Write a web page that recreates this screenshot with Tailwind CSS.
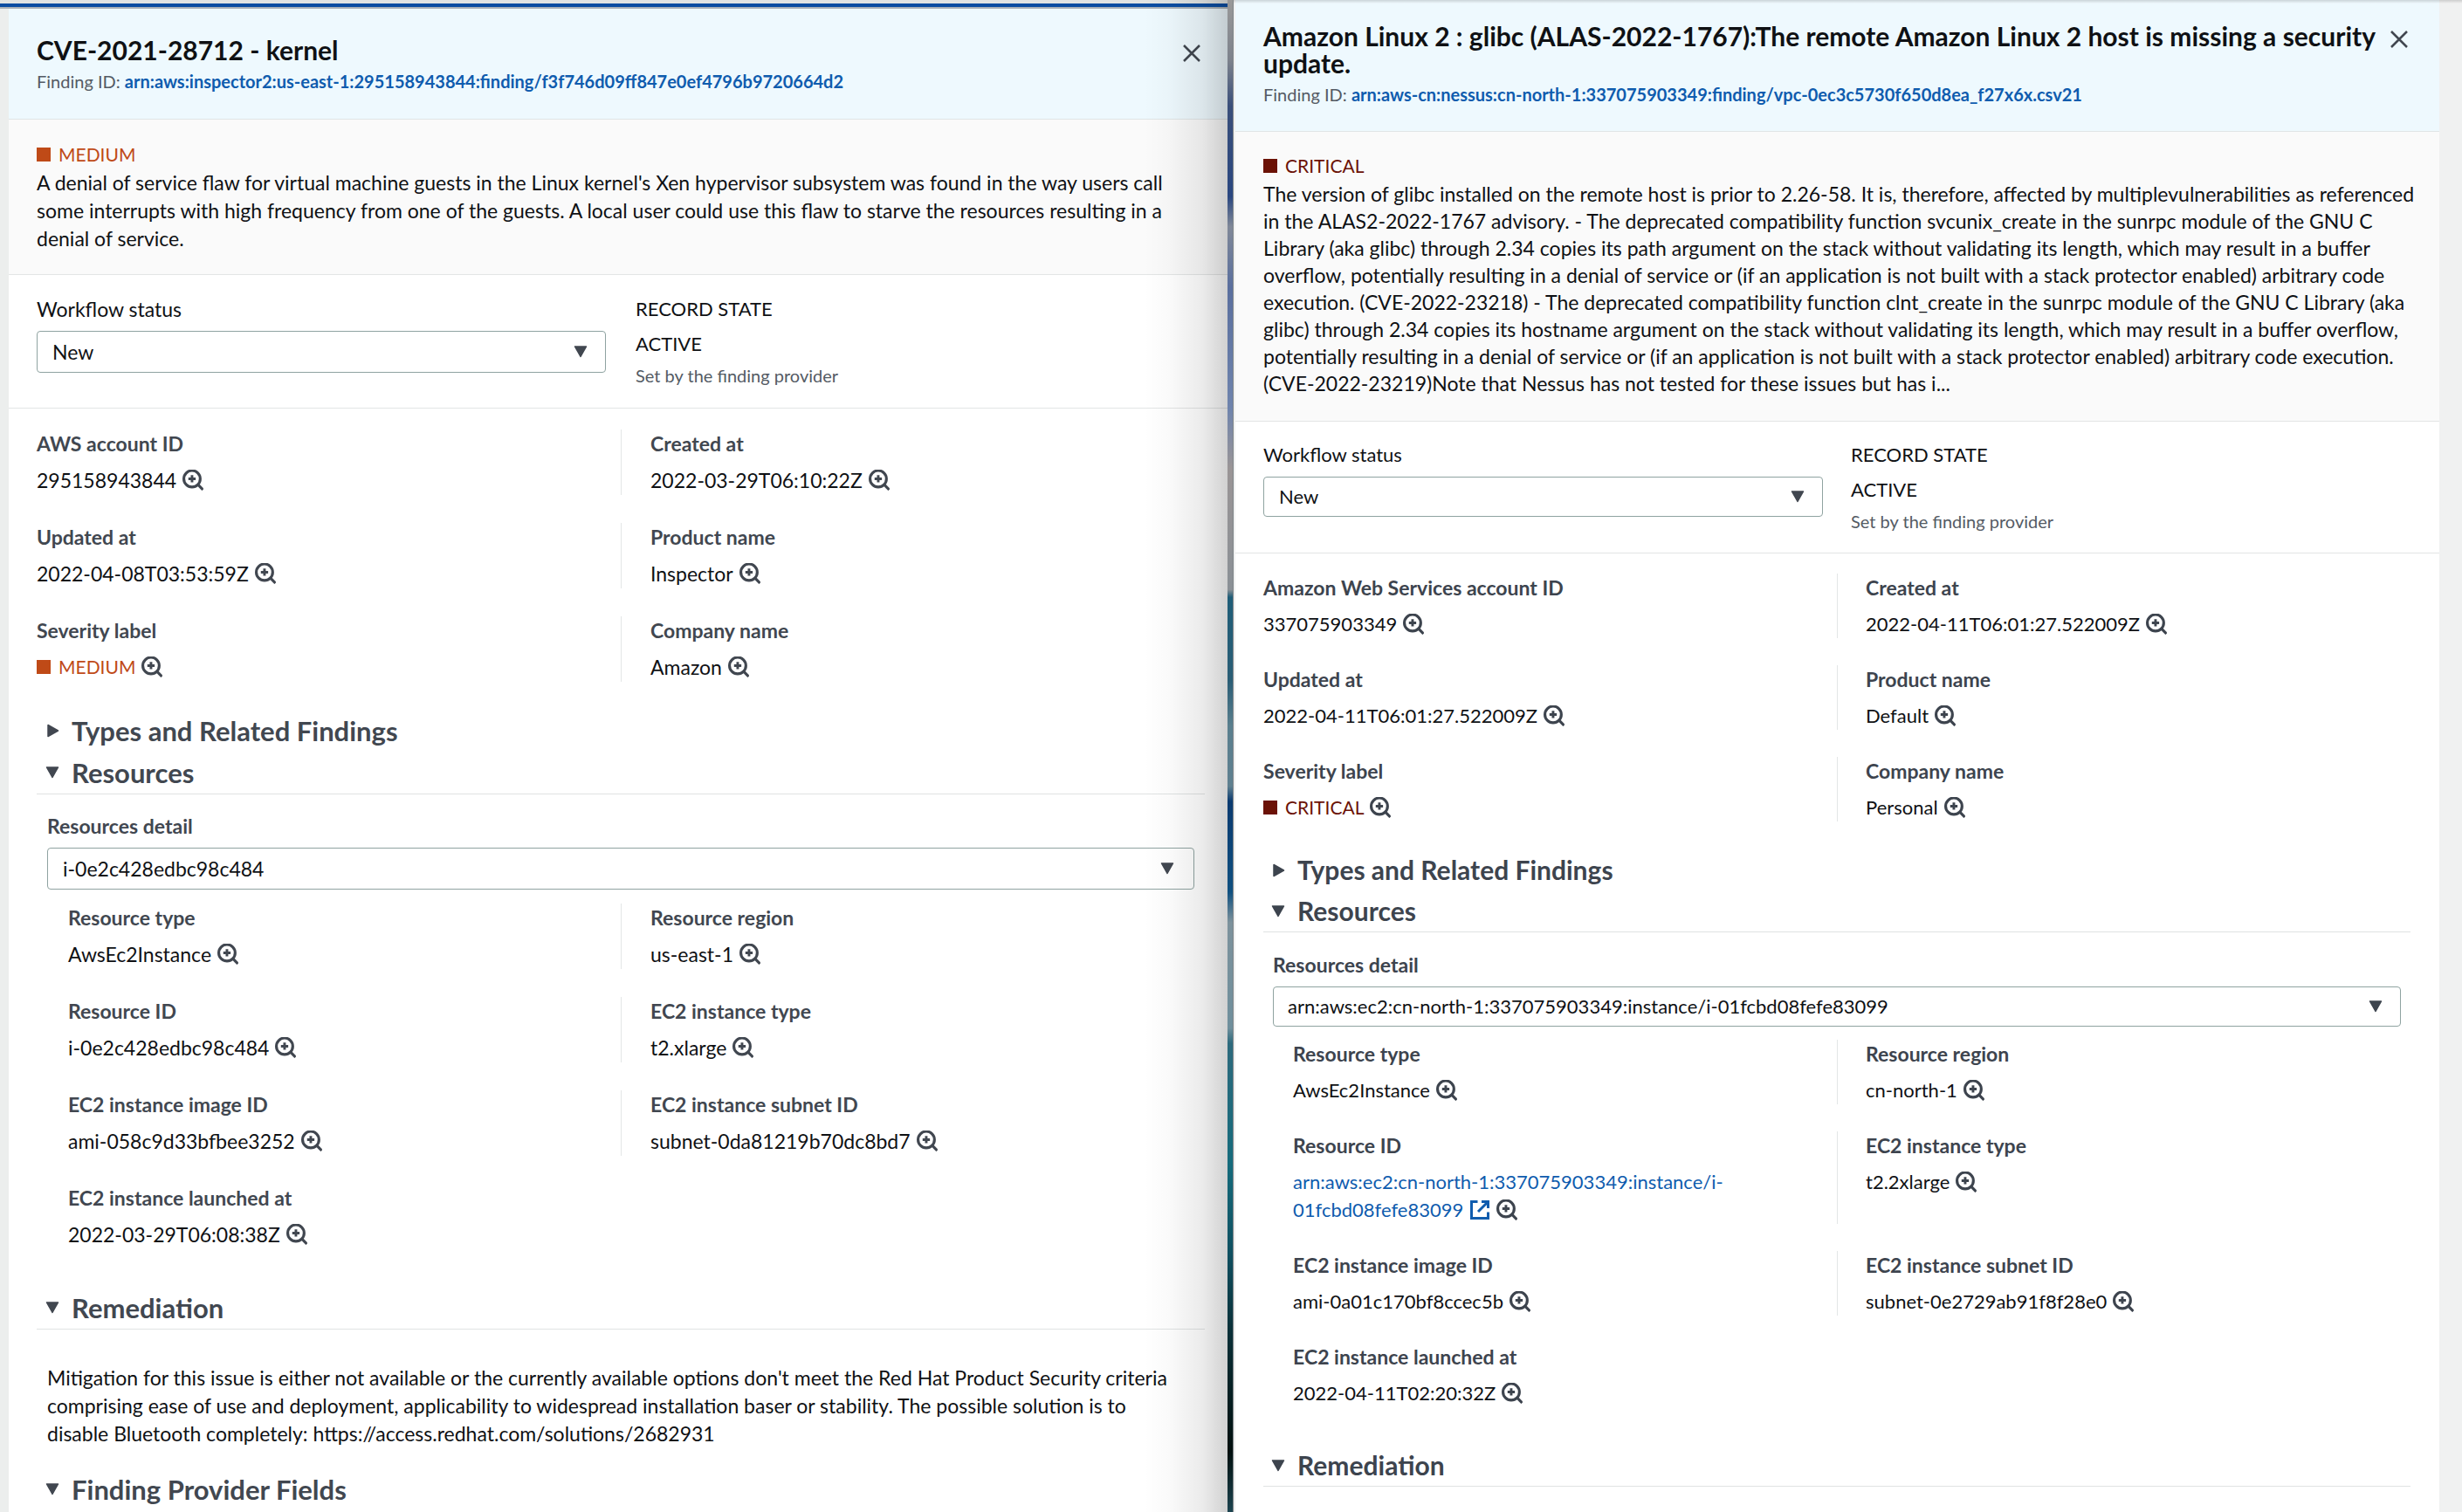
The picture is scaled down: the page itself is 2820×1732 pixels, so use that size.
<!DOCTYPE html>
<html lang="en">
<head>
<meta charset="utf-8">
<title>Security findings</title>
<script src="https://cdn.jsdelivr.net/npm/@tailwindcss/browser@4"></script>
</head>
<body class="bg-[#eceeed] font-['Lato','Noto_Sans',sans-serif] text-[23px] leading-8 text-[#0f1114]">

<svg class="hidden" aria-hidden="true">
  <symbol id="zoom" viewBox="0.5 0.5 23 23"><g fill="none" stroke="currentColor" stroke-width="3"><circle cx="11" cy="10.500" r="9"/><path d="M17.500 17l5.500 5.500"/><path d="M11 6.500v8M7 10.500h8" stroke-width="2.800"/></g></symbol>
  <symbol id="close" viewBox="0 0 20 20"><path d="M1 1l18 18M19 1L1 19" fill="none" stroke="currentColor" stroke-width="2.500"/></symbol>
  <symbol id="external" viewBox="0 0 24 24"><g fill="none" stroke="currentColor" stroke-width="3"><path d="M9.500 2.500H2.500v19h19v-7"/><path d="M14 2.500h7.500V10M21 3L10 14"/></g></symbol>
  <symbol id="down" viewBox="0 0 16 14"><path d="M1.500 1h13L8 12.500z" fill="currentColor" stroke="currentColor" stroke-width="1.500" stroke-linejoin="round"/></symbol>
  <symbol id="right" viewBox="0 0 14 16"><path d="M1 1.500v13L12.500 8z" fill="currentColor" stroke="currentColor" stroke-width="1.500" stroke-linejoin="round"/></symbol>
</svg>

<div class="flex min-h-screen overflow-hidden">

  <!-- Finding window on the left -->
  <section class="relative flex w-[49.86%] flex-col">
    <div class="h-1 bg-[#e1e4e3]"></div>
    <div class="h-1 bg-[#0a4da2]"></div>
    <div class="h-[2px] bg-[#a9b1b7]"></div>
    <div class="ml-[10px] flex-1 bg-white">
      <header class="flex items-start justify-between border-b border-[#e0e5e6] bg-[#eef9fe] pt-[29px] pr-[31px] pb-[29px] pl-8">
        <div>
          <h1 class="text-[30px] leading-9 font-bold">CVE-2021-28712 - kernel</h1>
          <p class="mt-1 text-[20px] leading-7 text-[#545b64]">Finding ID: <a href="#" class="font-bold text-[#0f5cae]">arn:aws:inspector2:us-east-1:295158943844:finding/f3f746d09ff847e0ef4796b9720664d2</a></p>
        </div>
        <button type="button" aria-label="Close" class="mt-3 text-[#414750]"><svg class="size-5"><use href="#close"/></svg></button>
      </header>
      <div class="border-b border-[#e3e5e5] bg-[#fafafa] pt-6 pb-[25px] pl-8">
        <p class="flex items-center gap-[9px] text-[21px] text-[#bf4a17]"><span class="size-4 bg-[#bf4a17]"></span>MEDIUM</p>
        <p class="whitespace-nowrap">A denial of service flaw for virtual machine guests in the Linux kernel's Xen hypervisor subsystem was found in the way users call<br>some interrupts with high frequency from one of the guests. A local user could use this flaw to starve the resources resulting in a<br>denial of service.</p>
      </div>
      <div class="grid grid-cols-2 gap-[34px] border-b border-[#e3e5e5] pt-[23px] pr-[26px] pb-[23px] pl-8">
        <div>
          <label for="status-1" class="block">Workflow status</label>
          <div class="relative mt-[9px] text-[#414750]">
            <select id="status-1" class="h-12 w-full appearance-none rounded border border-[#8fa3a1] bg-white pl-[17px] text-[#0f1114]"><option>New</option></select>
            <svg class="pointer-events-none absolute top-[17px] right-[21px] h-[14px] w-4"><use href="#down"/></svg>
          </div>
        </div>
        <div class="text-[22px]">
          <p>RECORD STATE</p>
          <p class="mt-2">ACTIVE</p>
          <p class="mt-[6px] text-[20px] leading-7 text-[#545b64]">Set by the finding provider</p>
        </div>
      </div>
      <div class="pt-6 pr-[26px] pl-8 text-[#414750]">
        <dl class="grid grid-cols-2 gap-y-8">
          <div class="h-[75px]"><dt class="font-bold">AWS account ID</dt><dd class="mt-[10px] flex items-center gap-[7px]"><span class="text-[#0f1114]">295158943844</span><button type="button" aria-label="Filter by account"><svg class="size-6"><use href="#zoom"/></svg></button></dd></div>
          <div class="h-[75px] border-l border-[#e3e6e6] pl-[33px]"><dt class="font-bold">Created at</dt><dd class="mt-[10px] flex items-center gap-[7px]"><span class="text-[#0f1114]">2022-03-29T06:10:22Z</span><button type="button" aria-label="Filter by creation time"><svg class="size-6"><use href="#zoom"/></svg></button></dd></div>
          <div class="h-[75px]"><dt class="font-bold">Updated at</dt><dd class="mt-[10px] flex items-center gap-[7px]"><span class="text-[#0f1114]">2022-04-08T03:53:59Z</span><button type="button" aria-label="Filter by update time"><svg class="size-6"><use href="#zoom"/></svg></button></dd></div>
          <div class="h-[75px] border-l border-[#e3e6e6] pl-[33px]"><dt class="font-bold">Product name</dt><dd class="mt-[10px] flex items-center gap-[7px]"><span class="text-[#0f1114]">Inspector</span><button type="button" aria-label="Filter by product"><svg class="size-6"><use href="#zoom"/></svg></button></dd></div>
          <div class="h-[75px]"><dt class="font-bold">Severity label</dt><dd class="mt-[10px] flex items-center gap-[7px]"><span class="flex items-center gap-[9px] text-[21px] text-[#bf4a17]"><span class="size-4 bg-[#bf4a17]"></span>MEDIUM</span><button type="button" aria-label="Filter by severity"><svg class="size-6"><use href="#zoom"/></svg></button></dd></div>
          <div class="h-[75px] border-l border-[#e3e6e6] pl-[33px]"><dt class="font-bold">Company name</dt><dd class="mt-[10px] flex items-center gap-[7px]"><span class="text-[#0f1114]">Amazon</span><button type="button" aria-label="Filter by company"><svg class="size-6"><use href="#zoom"/></svg></button></dd></div>
        </dl>

        <h2 class="mt-8 text-[31px] leading-[48px] font-bold"><button type="button" aria-expanded="false" class="flex w-full items-center pl-[10px] text-left"><span class="w-[30px]"><svg class="ml-[2px] h-4 w-[14px]"><use href="#right"/></svg></span>Types and Related Findings</button></h2>
        <h2 class="border-b border-[#e0e3e3] text-[31px] leading-[48px] font-bold"><button type="button" aria-expanded="true" class="flex w-full items-center pl-[10px] text-left"><span class="w-[30px]"><svg class="h-[14px] w-4"><use href="#down"/></svg></span>Resources</button></h2>

        <div class="px-3 pt-5">
          <label for="resource-1" class="block font-bold">Resources detail</label>
          <div class="relative mt-[9px]">
            <select id="resource-1" class="h-12 w-full appearance-none rounded border border-[#8fa3a1] bg-white pl-[17px] text-[#0f1114]"><option>i-0e2c428edbc98c484</option></select>
            <svg class="pointer-events-none absolute top-[17px] right-[23px] h-[14px] w-4"><use href="#down"/></svg>
          </div>
        </div>
        <dl class="mt-4 grid grid-cols-2 gap-y-8">
          <div class="h-[75px] pl-9"><dt class="font-bold">Resource type</dt><dd class="mt-[10px] flex items-center gap-[7px]"><span class="text-[#0f1114]">AwsEc2Instance</span><button type="button" aria-label="Filter by resource type"><svg class="size-6"><use href="#zoom"/></svg></button></dd></div>
          <div class="h-[75px] border-l border-[#e3e6e6] pl-[33px]"><dt class="font-bold">Resource region</dt><dd class="mt-[10px] flex items-center gap-[7px]"><span class="text-[#0f1114]">us-east-1</span><button type="button" aria-label="Filter by region"><svg class="size-6"><use href="#zoom"/></svg></button></dd></div>
          <div class="h-[75px] pl-9"><dt class="font-bold">Resource ID</dt><dd class="mt-[10px] flex items-center gap-[7px]"><span class="text-[#0f1114]">i-0e2c428edbc98c484</span><button type="button" aria-label="Filter by resource ID"><svg class="size-6"><use href="#zoom"/></svg></button></dd></div>
          <div class="h-[75px] border-l border-[#e3e6e6] pl-[33px]"><dt class="font-bold">EC2 instance type</dt><dd class="mt-[10px] flex items-center gap-[7px]"><span class="text-[#0f1114]">t2.xlarge</span><button type="button" aria-label="Filter by instance type"><svg class="size-6"><use href="#zoom"/></svg></button></dd></div>
          <div class="h-[75px] pl-9"><dt class="font-bold">EC2 instance image ID</dt><dd class="mt-[10px] flex items-center gap-[7px]"><span class="text-[#0f1114]">ami-058c9d33bfbee3252</span><button type="button" aria-label="Filter by image ID"><svg class="size-6"><use href="#zoom"/></svg></button></dd></div>
          <div class="h-[75px] border-l border-[#e3e6e6] pl-[33px]"><dt class="font-bold">EC2 instance subnet ID</dt><dd class="mt-[10px] flex items-center gap-[7px]"><span class="text-[#0f1114]">subnet-0da81219b70dc8bd7</span><button type="button" aria-label="Filter by subnet ID"><svg class="size-6"><use href="#zoom"/></svg></button></dd></div>
          <div class="h-[75px] pl-9"><dt class="font-bold">EC2 instance launched at</dt><dd class="mt-[10px] flex items-center gap-[7px]"><span class="text-[#0f1114]">2022-03-29T06:08:38Z</span><button type="button" aria-label="Filter by launch time"><svg class="size-6"><use href="#zoom"/></svg></button></dd></div>
        </dl>

        <h2 class="mt-[43px] border-b border-[#e0e3e3] text-[31px] leading-[48px] font-bold"><button type="button" aria-expanded="true" class="flex w-full items-center pl-[10px] text-left"><span class="w-[30px]"><svg class="h-[14px] w-4"><use href="#down"/></svg></span>Remediation</button></h2>
        <p class="pt-[39px] pl-3 whitespace-nowrap text-[#0f1114]">Mitigation for this issue is either not available or the currently available options don't meet the Red Hat Product Security criteria<br>comprising ease of use and deployment, applicability to widespread installation baser or stability. The possible solution is to<br>disable Bluetooth completely: https://access.redhat.com/solutions/2682931</p>
        <h2 class="mt-6 text-[31px] leading-[48px] font-bold"><button type="button" aria-expanded="true" class="flex w-full items-center pl-[10px] text-left"><span class="w-[30px]"><svg class="h-[14px] w-4"><use href="#down"/></svg></span>Finding Provider Fields</button></h2>
      </div>
    </div>
    <!-- Shadow cast by the window in front -->
    <div class="pointer-events-none absolute inset-y-0 right-0 w-24 bg-[linear-gradient(to_right,transparent,rgba(0,0,0,0.02)_30%,rgba(0,0,0,0.08)_70%,rgba(0,0,0,0.18))]"></div>
  </section>

  <!-- Desktop wallpaper between the windows -->
  <div class="w-[6px] bg-[linear-gradient(to_bottom,#999_0%,#7d828c_4%,#3a4f7a_7%,#2a4780_13%,#808898_15%,#5a6f9e_19%,#6f84ad_27%,#9a9596_31%,#8a9096_39%,#1f5d78_39.5%,#2a5d75_45%,#5a7f8e_48%,#5f8090_52%,#0a3a70_53%,#0f5080_59%,#7d929c_61%,#6f8f9c_68%,#2d6a7d_69%,#156b7c_77%,#0f4f60_83%,#0a3038_88%,#02100f_96%,#1c4450_100%)]"></div>

  <!-- Finding window on the right -->
  <section class="relative flex-1 border-l border-[#7f8588] bg-[#f0f1f1] pr-[26px] pl-[2px]">
    <div class="min-h-full bg-white">
      <header class="flex items-start justify-between border-b border-[#e0e5e6] bg-[#eef9fe] pt-[26px] pr-9 pb-7 pl-8">
        <div>
          <h1 class="text-[30px] leading-[31px] font-bold whitespace-nowrap">Amazon Linux 2 : glibc (ALAS-2022-1767):The remote Amazon Linux 2 host is missing a security<br>update.</h1>
          <p class="mt-[6px] text-[20px] leading-7 text-[#545b64]">Finding ID: <a href="#" class="font-bold text-[#0f5cae]">arn:aws-cn:nessus:cn-north-1:337075903349:finding/vpc-0ec3c5730f650d8ea_f27x6x.csv21</a></p>
        </div>
        <button type="button" aria-label="Close" class="mt-[9px] text-[#414750]"><svg class="size-5"><use href="#close"/></svg></button>
      </header>
      <div class="border-b border-[#e3e5e5] bg-[#fafafa] pt-[23px] pb-[27px] pl-8">
        <p class="flex items-center gap-[9px] text-[21px] text-[#6b1206]"><span class="size-4 bg-[#6b1206]"></span>CRITICAL</p>
        <p class="mt-px leading-[31px] whitespace-nowrap">The version of glibc installed on the remote host is prior to 2.26-58. It is, therefore, affected by multiplevulnerabilities as referenced<br>in the ALAS2-2022-1767 advisory. - The deprecated compatibility function svcunix_create in the sunrpc module of the GNU C<br>Library (aka glibc) through 2.34 copies its path argument on the stack without validating its length, which may result in a buffer<br>overflow, potentially resulting in a denial of service or (if an application is not built with a stack protector enabled) arbitrary code<br>execution. (CVE-2022-23218) - The deprecated compatibility function clnt_create in the sunrpc module of the GNU C Library (aka<br>glibc) through 2.34 copies its hostname argument on the stack without validating its length, which may result in a buffer overflow,<br>potentially resulting in a denial of service or (if an application is not built with a stack protector enabled) arbitrary code execution.<br>(CVE-2022-23219)Note that Nessus has not tested for these issues but has i...</p>
      </div>
      <div class="grid grid-cols-2 gap-8 border-b border-[#e3e5e5] pt-[22px] pr-[33px] pb-[22px] pl-8 text-[22px]">
        <div>
          <label for="status-2" class="block">Workflow status</label>
          <div class="relative mt-[9px] text-[#414750]">
            <select id="status-2" class="h-[46px] w-full appearance-none rounded border border-[#8fa3a1] bg-white pl-[17px] text-[#0f1114]"><option>New</option></select>
            <svg class="pointer-events-none absolute top-4 right-[21px] h-[14px] w-4"><use href="#down"/></svg>
          </div>
        </div>
        <div>
          <p>RECORD STATE</p>
          <p class="mt-2">ACTIVE</p>
          <p class="mt-[6px] text-[20px] leading-7 text-[#545b64]">Set by the finding provider</p>
        </div>
      </div>
      <div class="pt-[23px] pr-[33px] pl-8 text-[22px] text-[#3d444e]">
        <dl class="grid grid-cols-2 gap-y-[31px]">
          <div><dt class="text-[23px] font-bold">Amazon Web Services account ID</dt><dd class="mt-[10px] flex items-center gap-[7px]"><span class="text-[#0f1114]">337075903349</span><button type="button" aria-label="Filter by account"><svg class="size-6"><use href="#zoom"/></svg></button></dd></div>
          <div class="border-l border-[#e3e6e6] pl-8"><dt class="text-[23px] font-bold">Created at</dt><dd class="mt-[10px] flex items-center gap-[7px]"><span class="text-[#0f1114]">2022-04-11T06:01:27.522009Z</span><button type="button" aria-label="Filter by creation time"><svg class="size-6"><use href="#zoom"/></svg></button></dd></div>
          <div><dt class="text-[23px] font-bold">Updated at</dt><dd class="mt-[10px] flex items-center gap-[7px]"><span class="text-[#0f1114]">2022-04-11T06:01:27.522009Z</span><button type="button" aria-label="Filter by update time"><svg class="size-6"><use href="#zoom"/></svg></button></dd></div>
          <div class="border-l border-[#e3e6e6] pl-8"><dt class="text-[23px] font-bold">Product name</dt><dd class="mt-[10px] flex items-center gap-[7px]"><span class="text-[#0f1114]">Default</span><button type="button" aria-label="Filter by product"><svg class="size-6"><use href="#zoom"/></svg></button></dd></div>
          <div><dt class="text-[23px] font-bold">Severity label</dt><dd class="mt-[10px] flex items-center gap-[7px]"><span class="flex items-center gap-[9px] text-[21px] text-[#6b1206]"><span class="size-4 bg-[#6b1206]"></span>CRITICAL</span><button type="button" aria-label="Filter by severity"><svg class="size-6"><use href="#zoom"/></svg></button></dd></div>
          <div class="border-l border-[#e3e6e6] pl-8"><dt class="text-[23px] font-bold">Company name</dt><dd class="mt-[10px] flex items-center gap-[7px]"><span class="text-[#0f1114]">Personal</span><button type="button" aria-label="Filter by company"><svg class="size-6"><use href="#zoom"/></svg></button></dd></div>
        </dl>

        <h2 class="mt-8 text-[30px] leading-[47px] font-bold"><button type="button" aria-expanded="false" class="flex w-full items-center pl-[9px] text-left"><span class="w-[30px]"><svg class="ml-[2px] h-4 w-[14px]"><use href="#right"/></svg></span>Types and Related Findings</button></h2>
        <h2 class="border-b border-[#e0e3e3] text-[30px] leading-[47px] font-bold"><button type="button" aria-expanded="true" class="flex w-full items-center pl-[9px] text-left"><span class="w-[30px]"><svg class="h-[14px] w-4"><use href="#down"/></svg></span>Resources</button></h2>

        <div class="px-[11px] pt-[21px]">
          <label for="resource-2" class="block text-[23px] font-bold">Resources detail</label>
          <div class="relative mt-[9px]">
            <select id="resource-2" class="h-[46px] w-full appearance-none rounded border border-[#8fa3a1] bg-white pl-4 text-[#0f1114]"><option>arn:aws:ec2:cn-north-1:337075903349:instance/i-01fcbd08fefe83099</option></select>
            <svg class="pointer-events-none absolute top-4 right-[21px] h-[14px] w-4"><use href="#down"/></svg>
          </div>
        </div>
        <dl class="mt-[15px] grid grid-cols-2 gap-y-[31px]">
          <div class="pl-[34px]"><dt class="text-[23px] font-bold">Resource type</dt><dd class="mt-[10px] flex items-center gap-[7px]"><span class="text-[#0f1114]">AwsEc2Instance</span><button type="button" aria-label="Filter by resource type"><svg class="size-6"><use href="#zoom"/></svg></button></dd></div>
          <div class="border-l border-[#e3e6e6] pl-8"><dt class="text-[23px] font-bold">Resource region</dt><dd class="mt-[10px] flex items-center gap-[7px]"><span class="text-[#0f1114]">cn-north-1</span><button type="button" aria-label="Filter by region"><svg class="size-6"><use href="#zoom"/></svg></button></dd></div>
          <div class="pl-[34px]"><dt class="text-[23px] font-bold">Resource ID</dt><dd class="mt-[10px]"><a href="#" class="block text-[#0f5cae]">arn:aws:ec2:cn-north-1:337075903349:instance/i-</a><span class="flex items-center gap-[7px]"><a href="#" class="flex items-center gap-[7px] text-[#0f5cae]">01fcbd08fefe83099<svg class="size-6"><use href="#external"/></svg></a><button type="button" aria-label="Filter by resource ID"><svg class="size-6"><use href="#zoom"/></svg></button></span></dd></div>
          <div class="border-l border-[#e3e6e6] pl-8"><dt class="text-[23px] font-bold">EC2 instance type</dt><dd class="mt-[10px] flex items-center gap-[7px]"><span class="text-[#0f1114]">t2.2xlarge</span><button type="button" aria-label="Filter by instance type"><svg class="size-6"><use href="#zoom"/></svg></button></dd></div>
          <div class="pl-[34px]"><dt class="text-[23px] font-bold">EC2 instance image ID</dt><dd class="mt-[10px] flex items-center gap-[7px]"><span class="text-[#0f1114]">ami-0a01c170bf8ccec5b</span><button type="button" aria-label="Filter by image ID"><svg class="size-6"><use href="#zoom"/></svg></button></dd></div>
          <div class="border-l border-[#e3e6e6] pl-8"><dt class="text-[23px] font-bold">EC2 instance subnet ID</dt><dd class="mt-[10px] flex items-center gap-[7px]"><span class="text-[#0f1114]">subnet-0e2729ab91f8f28e0</span><button type="button" aria-label="Filter by subnet ID"><svg class="size-6"><use href="#zoom"/></svg></button></dd></div>
          <div class="pl-[34px]"><dt class="text-[23px] font-bold">EC2 instance launched at</dt><dd class="mt-[10px] flex items-center gap-[7px]"><span class="text-[#0f1114]">2022-04-11T02:20:32Z</span><button type="button" aria-label="Filter by launch time"><svg class="size-6"><use href="#zoom"/></svg></button></dd></div>
        </dl>

        <h2 class="mt-[43px] border-b border-[#e0e3e3] text-[30px] leading-[47px] font-bold"><button type="button" aria-expanded="true" class="flex w-full items-center pl-[9px] text-left"><span class="w-[30px]"><svg class="h-[14px] w-4"><use href="#down"/></svg></span>Remediation</button></h2>
      </div>
    </div>
    <div class="pointer-events-none absolute inset-x-0 top-0 h-1 bg-gradient-to-b from-black/15 to-transparent"></div>
  </section>
</div>
</body>
</html>
